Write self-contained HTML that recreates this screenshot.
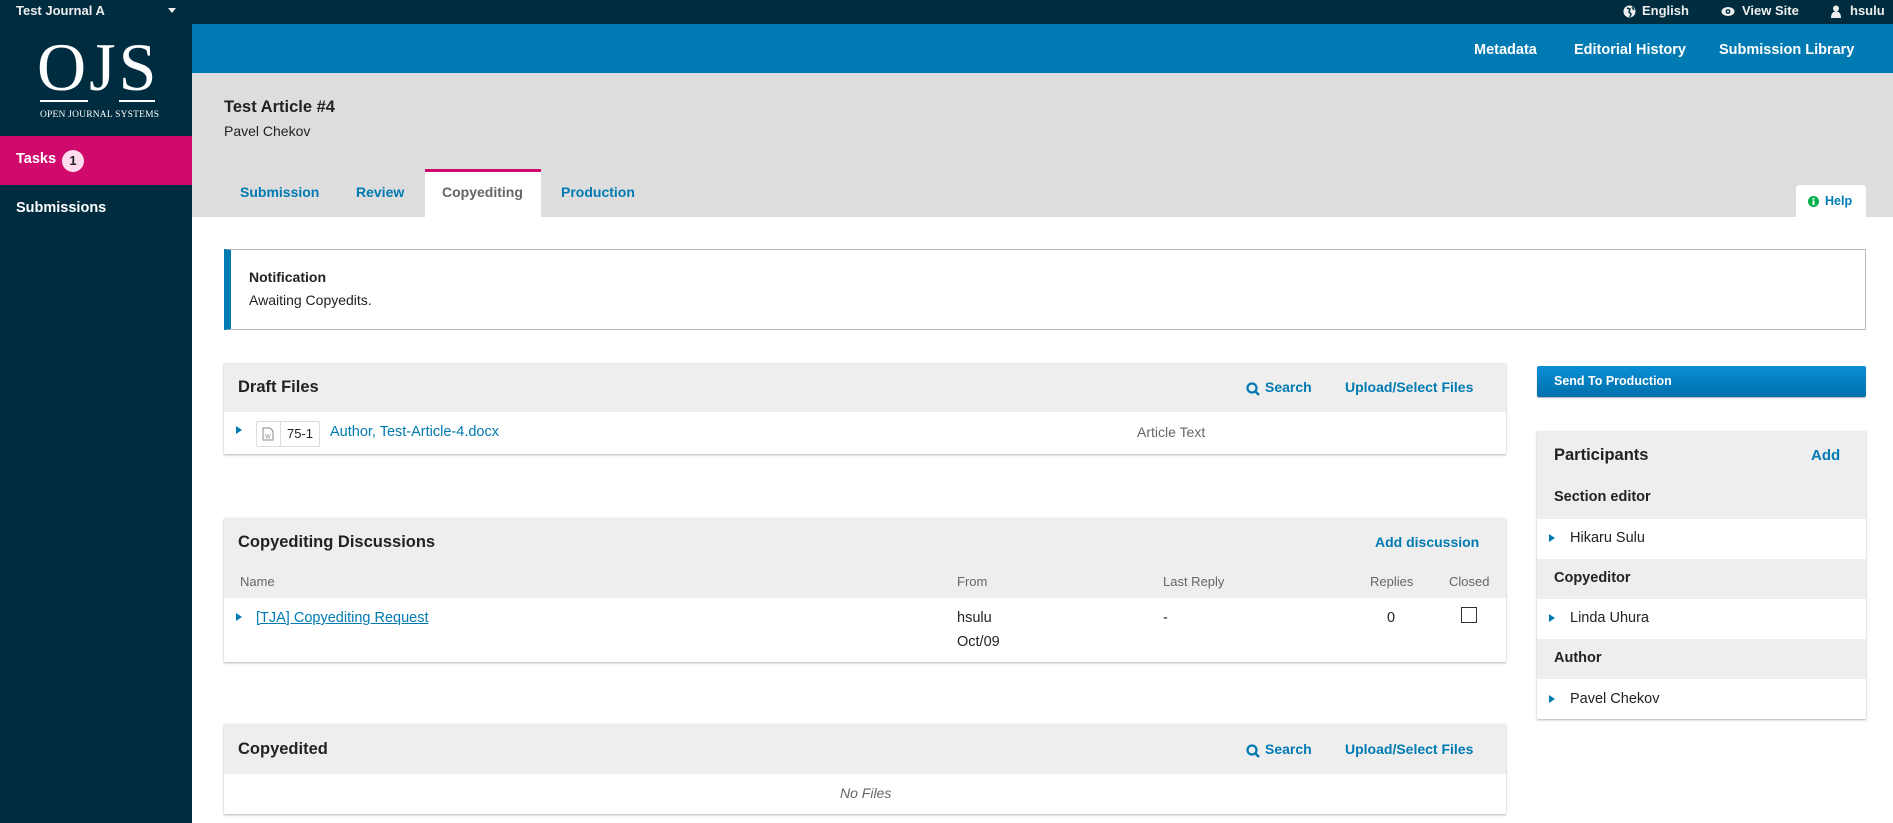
<!DOCTYPE html>
<html><head><meta charset="utf-8"><style>
*{box-sizing:border-box;margin:0;padding:0}
body{width:1893px;height:823px;overflow:hidden;position:relative;background:#fff;font-family:"Liberation Sans",sans-serif;color:#222;font-size:15px}
.a{position:absolute;white-space:nowrap}
.b{font-weight:bold}
.lk{color:#007ab2}
.panel{position:absolute;background:#fff;box-shadow:0 1px 2px rgba(0,0,0,.3)}
.ph{position:absolute;left:0;right:0;top:0;background:#eee}
.tri{position:absolute;width:0;height:0;border-top:4px solid transparent;border-bottom:4px solid transparent;border-left:6px solid #007ab2}
.h{font-size:16.5px;font-weight:bold;color:#222}
.g{color:#666;font-size:13px}
</style></head><body>
<div class="a" style="left:0;top:0;width:1893px;height:24px;background:#002c40"></div>
<div class="a b" style="left:16px;top:3px;font-size:13px;color:#eee">Test Journal A</div>
<div class="a" style="left:168px;top:8px;border-left:4px solid transparent;border-right:4px solid transparent;border-top:5px solid #eee"></div>
<svg class="a" style="left:1623px;top:5px" width="13" height="13" viewBox="0 0 13 13"><circle cx="6.5" cy="6.5" r="6" fill="#eee"/><path d="M4 3 L7 4 L6 7 L8 9 L7 12 M9 2 L11 5" stroke="#002c40" stroke-width="1.5" fill="none"/></svg>
<div class="a b" style="left:1642px;top:3px;font-size:13px;color:#eee">English</div>
<svg class="a" style="left:1721px;top:6px" width="14" height="11" viewBox="0 0 14 11"><ellipse cx="7" cy="5.5" rx="6.5" ry="4.5" fill="#eee"/><circle cx="7" cy="5.5" r="2.4" fill="#002c40"/><circle cx="7" cy="5.5" r="1" fill="#eee"/></svg>
<div class="a b" style="left:1742px;top:3px;font-size:13px;color:#eee">View Site</div>
<svg class="a" style="left:1831px;top:5px" width="10" height="13" viewBox="0 0 10 13"><circle cx="5" cy="3.5" r="3" fill="#eee"/><path d="M0 13 Q0 6.5 5 6.5 Q10 6.5 10 13Z" fill="#eee"/></svg>
<div class="a b" style="left:1850px;top:3px;font-size:13px;color:#eee">hsulu</div>
<div class="a" style="left:0;top:24px;width:192px;height:799px;background:#002c40"></div>
<div class="a" style="left:37px;top:33px;font-family:'Liberation Serif',serif;font-size:68px;color:#fff;letter-spacing:3px;line-height:68px">OJS</div>
<div class="a" style="left:40px;top:100px;width:48px;height:2px;background:#fff"></div>
<div class="a" style="left:119px;top:100px;width:36px;height:2px;background:#fff"></div>
<div class="a" style="left:40px;top:110px;font-family:'Liberation Serif',serif;font-size:9.5px;color:#fff;letter-spacing:.2px">OPEN JOURNAL SYSTEMS</div>
<div class="a" style="left:0;top:136px;width:192px;height:49px;background:#d00a6c"></div>
<div class="a b" style="left:16px;top:151px;color:#fff;font-size:14.5px">Tasks</div>
<div class="a b" style="left:62px;top:150px;width:22px;height:22px;border-radius:50%;background:#fde;color:#222;font-size:13px;text-align:center;line-height:22px">1</div>
<div class="a b" style="left:16px;top:200px;color:#fff;font-size:14.5px">Submissions</div>
<div class="a" style="left:192px;top:24px;width:1701px;height:49px;background:#007ab2"></div>
<div class="a b" style="left:1474px;top:42px;color:#fff;font-size:14.5px">Metadata</div>
<div class="a b" style="left:1574px;top:42px;color:#fff;font-size:14.5px">Editorial History</div>
<div class="a b" style="left:1719px;top:42px;color:#fff;font-size:14.5px">Submission Library</div>
<div class="a" style="left:192px;top:73px;width:1701px;height:144px;background:#ddd"></div>
<div class="a b" style="left:224px;top:98px;font-size:16.5px">Test Article #4</div>
<div class="a" style="left:224px;top:123px;font-size:14px">Pavel Chekov</div>
<div class="a b lk" style="left:240px;top:184px;font-size:14px">Submission</div>
<div class="a b lk" style="left:356px;top:184px;font-size:14px">Review</div>
<div class="a" style="left:425px;top:169px;width:116px;height:48px;background:#fff;border-top:3px solid #d00a6c"></div>
<div class="a b" style="left:442px;top:184px;font-size:14px;color:#666">Copyediting</div>
<div class="a b lk" style="left:561px;top:184px;font-size:14px">Production</div>
<div class="a" style="left:1796px;top:185px;width:70px;height:32px;background:#fff;border-radius:3px 3px 0 0"></div>
<svg class="a" style="left:1808px;top:196px" width="11" height="11"><circle cx="5.5" cy="5.5" r="5.5" fill="#00b24e"/><rect x="4.5" y="4.5" width="2" height="4.5" fill="#fff"/><rect x="4.5" y="2" width="2" height="1.6" fill="#fff"/></svg>
<div class="a b lk" style="left:1825px;top:194px;font-size:12.5px">Help</div>
<div class="a" style="left:224px;top:249px;width:1642px;height:81px;border:1px solid #bbb;border-left:7px solid #007ab2"></div>
<div class="a b" style="left:249px;top:269px;font-size:14px">Notification</div>
<div class="a" style="left:249px;top:292px;font-size:14px">Awaiting Copyedits.</div>
<div class="panel" style="left:224px;top:363px;width:1282px;height:91px">
 <div class="ph" style="height:49px"></div>
 <div class="a h" style="left:14px;top:15px">Draft Files</div>
 <svg class="a" style="left:1022px;top:19px" width="14" height="14" viewBox="0 0 14 14"><circle cx="6" cy="6" r="4.5" stroke="#007ab2" stroke-width="2.2" fill="none"/><path d="M9 9 L13 13" stroke="#007ab2" stroke-width="2.4"/></svg>
 <div class="a b lk" style="left:1041px;top:16px;font-size:14px">Search</div>
 <div class="a b lk" style="left:1121px;top:16px;font-size:14px">Upload/Select Files</div>
 <div class="tri" style="left:12px;top:63px"></div>
 <div class="a" style="left:32px;top:58px;width:64px;height:26px;border:1px solid #ddd;border-radius:2px"></div>
 <div class="a" style="left:56px;top:58px;width:1px;height:26px;background:#ddd"></div>
 <svg class="a" style="left:38px;top:64px" width="12" height="14" viewBox="0 0 12 14"><path d="M1 1 H8 L11 4 V13 H1Z" stroke="#888" fill="none"/><text x="3" y="11.5" font-size="6" fill="#888" font-family="Liberation Sans">W</text></svg>
 <div class="a" style="left:63px;top:63px;font-size:13px">75-1</div>
 <div class="a lk" style="left:106px;top:61px;font-size:14.5px">Author, Test-Article-4.docx</div>
 <div class="a" style="left:913px;top:61px;font-size:14px;color:#666">Article Text</div>
</div>
<div class="panel" style="left:224px;top:518px;width:1282px;height:144px">
 <div class="ph" style="height:80px"></div>
 <div class="a h" style="left:14px;top:15px">Copyediting Discussions</div>
 <div class="a b lk" style="left:1151px;top:16px;font-size:14px">Add discussion</div>
 <div class="a g" style="left:16px;top:56px">Name</div>
 <div class="a g" style="left:733px;top:56px">From</div>
 <div class="a g" style="left:939px;top:56px">Last Reply</div>
 <div class="a g" style="left:1146px;top:56px">Replies</div>
 <div class="a g" style="left:1225px;top:56px">Closed</div>
 <div class="tri" style="left:12px;top:95px"></div>
 <div class="a lk" style="left:32px;top:92px;font-size:14.5px;text-decoration:underline">[TJA] Copyediting Request</div>
 <div class="a" style="left:733px;top:92px;font-size:14.5px">hsulu</div>
 <div class="a" style="left:733px;top:116px;font-size:14.5px">Oct/09</div>
 <div class="a" style="left:939px;top:92px;font-size:14.5px">-</div>
 <div class="a" style="left:1163px;top:92px;font-size:14.5px">0</div>
 <div class="a" style="left:1237px;top:89px;width:16px;height:16px;border:1.5px solid #333"></div>
</div>
<div class="panel" style="left:224px;top:724px;width:1282px;height:90px">
 <div class="ph" style="height:50px"></div>
 <div class="a h" style="left:14px;top:16px">Copyedited</div>
 <svg class="a" style="left:1022px;top:20px" width="14" height="14" viewBox="0 0 14 14"><circle cx="6" cy="6" r="4.5" stroke="#007ab2" stroke-width="2.2" fill="none"/><path d="M9 9 L13 13" stroke="#007ab2" stroke-width="2.4"/></svg>
 <div class="a b lk" style="left:1041px;top:17px;font-size:14px">Search</div>
 <div class="a b lk" style="left:1121px;top:17px;font-size:14px">Upload/Select Files</div>
 <div class="a" style="left:616px;top:61px;font-size:14px;font-style:italic;color:#666">No Files</div>
</div>
<div class="a" style="left:1537px;top:366px;width:329px;height:31px;background:linear-gradient(#0a8fd6,#0070ab);border-radius:2px;box-shadow:0 1px 1px rgba(0,0,0,.3)"></div>
<div class="a b" style="left:1554px;top:374px;color:#fff;font-size:12.5px">Send To Production</div>
<div class="panel" style="left:1537px;top:431px;width:329px;height:288px">
 <div class="ph" style="height:88px"></div>
 <div class="a h" style="left:17px;top:15px">Participants</div>
 <div class="a b lk" style="left:274px;top:16px;font-size:15px">Add</div>
 <div class="a b" style="left:17px;top:58px;font-size:14.5px">Section editor</div>
 <div class="tri" style="left:12px;top:103px"></div>
 <div class="a" style="left:33px;top:99px;font-size:14.5px">Hikaru Sulu</div>
 <div class="a" style="left:0;top:128px;width:329px;height:40px;background:#eee"></div>
 <div class="a b" style="left:17px;top:139px;font-size:14.5px">Copyeditor</div>
 <div class="tri" style="left:12px;top:183px"></div>
 <div class="a" style="left:33px;top:179px;font-size:14.5px">Linda Uhura</div>
 <div class="a" style="left:0;top:208px;width:329px;height:40px;background:#eee"></div>
 <div class="a b" style="left:17px;top:219px;font-size:14.5px">Author</div>
 <div class="tri" style="left:12px;top:264px"></div>
 <div class="a" style="left:33px;top:260px;font-size:14.5px">Pavel Chekov</div>
</div>
</body></html>
